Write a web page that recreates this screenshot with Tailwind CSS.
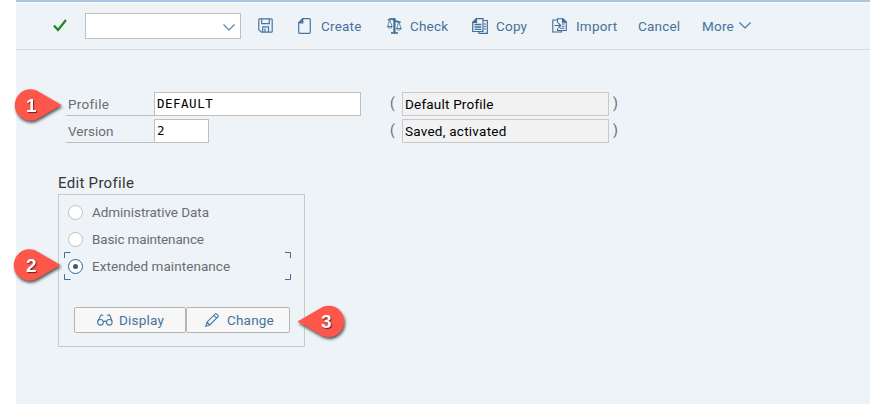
<!DOCTYPE html>
<html lang="en">
<head>
<meta charset="utf-8">
<title>Edit Profile</title>
<script src="https://cdn.jsdelivr.net/npm/@tailwindcss/browser@4"></script>
</head>
<body class="w-[870px] h-[404px] overflow-hidden bg-white pl-4 relative font-['Roboto','Liberation_Sans',sans-serif] text-[13.5px] tracking-[0.2px] leading-5">
<main class="h-[404px] bg-[#eef3f8] border-t-2 border-[#a9c6de]">
  <header class="h-12 flex items-center border-b border-[#d5dde4] pl-[37px] text-[#46729a] shadow-[inset_0_1px_0_#f7fafc]">
    <svg class="w-[14px] h-[13px] mr-[18px] mt-[-1px]" viewBox="0 0 14 13" fill="none" stroke="#1f862b" stroke-width="2.2"><path d="M1 6.5 5 11 13 1"/></svg>
    <div class="w-[156px] h-[26px] border border-[#bfbfbf] bg-white flex items-center justify-end pr-[5px]">
      <svg class="w-3 h-[7px] mt-[3px]" viewBox="0 0 12 7" fill="none" stroke="#5485ad" stroke-width="1.2"><path d="M.5 .5 6 6 11.5 .5"/></svg>
    </div>
    <svg class="w-[15px] h-[15px] ml-[17px]" viewBox="0 0 15 15" fill="none" stroke="#46769f" stroke-width="1.2"><path d="M2 .8H13.2Q14.2.8 14.2 1.8V13.2Q14.2 14.2 13.2 14.2H3.5L.8 11.7V1.8Q.8.8 2 .8ZM3.7 1V5.7H11.3V1M4.7 14V8.8H10.5V14M7 10.5V14"/></svg>
    <div class="flex items-center ml-[25px] w-[89px]"><svg class="w-[13px] h-4 mr-[10px]" viewBox="0 0 13 16" fill="none" stroke="#46769f" stroke-width="1.2"><path d="M4.8.7H11.3Q12.3.7 12.3 1.7V14.3Q12.3 15.3 11.3 15.3H1.7Q.7 15.3.7 14.3V4.8Z"/><path d="M4.8.7V4.8H.7Z" fill="#46769f"/></svg><span>Create</span></div>
    <div class="flex items-center w-[85px]"><svg class="w-[15px] h-[17px] mr-[8px] mt-[-1px]" viewBox="0 0 15 17" fill="none" stroke="#3f6e98"><path d="M1 3.2Q4 .6 7.2 3T13.7 5" stroke-width="1.6"/><path d="M7.4 1V16" stroke-width="2.2"/><path d="M4 16H11" stroke-width="1.6"/><path d="M2.8 2.8.6 9.5H5.1ZM11.8 5 9.6 11.5H14.1Z" stroke-width=".8"/><path d="M.5 9.5H5.2Q4.7 11.2 2.8 11.2T.5 9.5ZM9.5 11.5H14.2Q13.7 13.2 11.8 13.2T9.5 11.5Z" stroke-width=".8"/></svg><span>Check</span></div>
    <div class="flex items-center w-[80px]"><svg class="w-4 h-4 mr-[8px]" viewBox="0 0 16 16" fill="none" stroke="#3f6e98" stroke-width="1.2"><path d="M4.5.7H11V13.5H.7V4.5Z"/><path d="M4.5.7V4.5H.7Z" fill="#3f6e98"/><path d="M2.5 6.5H9.3M2.5 9H9.3M2.5 11.3H9.3" stroke-width="1.3"/><path d="M11 2.5H15.3V15.3H7V14M12 6H14M12 8.5H14M12 11H14"/></svg><span>Copy</span></div>
    <div class="flex items-center w-[86px]"><svg class="w-[15px] h-[15px] mr-[9px] mt-[-1px]" viewBox="0 0 15 15" fill="none" stroke="#3f6e98" stroke-width="1.1"><path d="M5.5 2H.8V14H9.5V12.5"/><path d="M5.5 5V.8H11L14.3 4V12.5H5.5V10.5M2.5 7.5H8.5M6.3 5 8.8 7.5 6.3 10M10 6H12.5M10 8.3H12.5M8 10.3H12.5"/><path d="M10.5.8V4.3H14.3Z" fill="#3f6e98"/></svg><span>Import</span></div>
    <span class="w-[64px]">Cancel</span>
    <span class="w-[37px]">More</span>
    <svg class="w-3 h-[7px]" viewBox="0 0 12 7" fill="none" stroke="#46729a" stroke-width="1.1"><path d="M.4 .5 6 6 11.6 .5"/></svg>
  </header>

  <section class="mt-[42px] ml-[50px] flex flex-col gap-[3px] text-[#6a6d70]">
    <div class="flex h-6">
      <label class="w-[88px] border-b border-[#bfbfbf] pl-[2px] pt-[2px] tracking-[0.3px]">Profile</label>
      <div class="w-[207px] border border-[#bfbfbf] bg-white pl-[2px] pt-px text-black font-['DejaVu_Sans_Mono',monospace] text-[12.5px] tracking-[0.5px]">DEFAULT</div>
      <span class="w-[41px] pl-[29px] pt-px text-[14px]">(</span>
      <div class="w-[207px] border border-[#cacaca] bg-[#f2f2f2] pl-[2px] pt-px text-black">Default Profile</div>
      <span class="pl-[4px] pt-px text-[14px]">)</span>
    </div>
    <div class="flex h-6">
      <label class="w-[88px] border-b border-[#bfbfbf] pl-[2px] pt-[2px] tracking-[0px]">Version</label>
      <div class="w-[55px] mr-[152px] border border-[#bfbfbf] bg-white pl-[2px] pt-px text-black font-['DejaVu_Sans_Mono',monospace] text-[12.5px] tracking-[0.5px]">2</div>
      <span class="w-[41px] pl-[29px] pt-px text-[14px]">(</span>
      <div class="w-[207px] border border-[#cacaca] bg-[#f2f2f2] pl-[2px] pt-px text-black tracking-[0.25px]">Saved, activated</div>
      <span class="pl-[4px] pt-px text-[14px]">)</span>
    </div>
  </section>

  <section class="ml-[42px] mt-[30px]">
    <h2 class="h-[21px] text-[15px] tracking-[0.3px] text-[#32363a]">Edit Profile</h2>
    <div class="w-[247px] h-[153px] border border-[#cacaca] text-[#6a6d70] pl-[5px] pt-[4px]">
      <div class="h-[27px] flex items-center pl-1 tracking-[-0.05px]"><i class="size-[15px] rounded-full bg-white border border-[#bfbfbf] mr-[9px]"></i><span class="pb-0.5">Administrative Data</span></div>
      <div class="h-[27px] flex items-center pl-1 tracking-[-0.15px]"><i class="size-[15px] rounded-full bg-white border border-[#bfbfbf] mr-[9px]"></i><span class="pb-0.5">Basic maintenance</span></div>
      <div class="h-[28px] w-[228px] flex items-center pl-1 pb-px relative tracking-[0.05px]">
        <svg class="absolute inset-0 w-[228px] h-[28px] mt-[-1px]" viewBox="0 0 228 28" fill="none" stroke="#3f6e98"><path d="M.5 6V.5H6.5M221 .5H226.5V6M.5 22V27.5H6.5M221 27.5H226.5V22"/></svg>
        <i class="size-[15px] rounded-full bg-white border border-[#346187] mr-[9px] flex items-center justify-center"><b class="size-[5px] rounded-full bg-[#346187]"></b></i><span class="pb-0.5">Extended maintenance</span>
      </div>
      <div class="flex mt-[26px] pl-[10px] text-[#46729a]">
        <button class="w-[112px] h-[26px] border border-[#b5b5b5] rounded-[2px] bg-[#f7f7f7] flex items-center pl-[22px]"><svg class="w-4 h-3 mr-[6px]" viewBox="0 0 16 12" fill="none" stroke="#46769f" stroke-width="1.1"><circle cx="3.5" cy="8.3" r="2.8"/><circle cx="12.3" cy="8.3" r="2.8"/><path d="M6.3 7.8Q8 6.5 9.5 7.8M.8 7.3 4 1.2Q5 .4 6 1.7M15 7.3 12.8 1.2Q11.5.4 10.2 1.7"/></svg>Display</button>
        <button class="w-[104px] h-[26px] border border-[#b5b5b5] rounded-[2px] bg-[#f7f7f7] flex items-center pl-[18px]"><svg class="w-[14px] h-[14px] mr-[8px]" viewBox="0 0 14 14" fill="none" stroke="#46769f" stroke-width="1.1"><path d="M.8 13.2 2 9.2 10.3.9Q10.8.5 11.3.9L13.1 2.7Q13.5 3.2 13.1 3.7L4.8 12ZM8.8 2.4 11.6 5.2M2 9.2 4.8 12"/></svg>Change</button>
      </div>
    </div>
  </section>
</main>

<div class="absolute left-[8px] top-[86px] w-[56px] h-[42px] drop-shadow-[1px_2px_1.5px_#555]">
  <svg class="absolute inset-0" width="56" height="42" viewBox="0 0 56 42"><path d="M53.5 19 32 31.5A15.7 15.7 0 1 1 32 6.5Z" fill="#fd574b"/></svg>
  <b class="absolute left-[18px] top-[10px] font-['Liberation_Sans',sans-serif] text-[19px] text-white tracking-normal [text-shadow:1px_1px_1px_#702020]">1</b>
</div>
<div class="absolute left-[7px] top-[246px] w-[56px] h-[42px] drop-shadow-[1px_2px_1.5px_#555]">
  <svg class="absolute inset-0" width="56" height="42" viewBox="0 0 56 42"><path d="M53.5 19 32 31.5A15.7 15.7 0 1 1 32 6.5Z" fill="#fd574b"/></svg>
  <b class="absolute left-[19px] top-[10px] font-['Liberation_Sans',sans-serif] text-[19px] text-white tracking-normal [text-shadow:1px_1px_1px_#702020]">2</b>
</div>
<div class="absolute left-[295px] top-[302px] w-[56px] h-[42px] drop-shadow-[1px_2px_1.5px_#555]">
  <svg class="absolute inset-0" width="56" height="42" viewBox="0 0 56 42"><path d="M2.5 19.5 24 32A15.7 15.7 0 1 0 24 7Z" fill="#fd574b"/></svg>
  <b class="absolute left-[26px] top-[10px] font-['Liberation_Sans',sans-serif] text-[19px] text-white tracking-normal [text-shadow:1px_1px_1px_#702020]">3</b>
</div>
</body>
</html>
